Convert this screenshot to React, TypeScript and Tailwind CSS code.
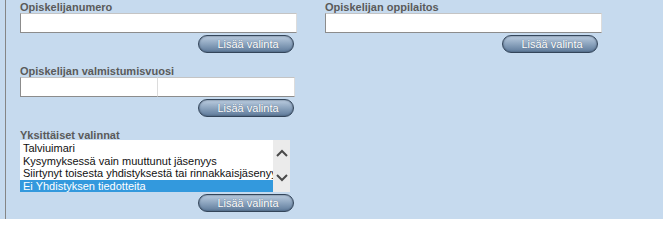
import React from "react";

const font = { fontFamily: '"Liberation Sans", Arial, sans-serif' };

function Label({ children }: { children: React.ReactNode }) {
  return (
    <div className="h-[13px] text-[11px] leading-[15px] font-bold text-[#5a5a5a] whitespace-nowrap">
      {children}
    </div>
  );
}

function TextBox({ className = "" }: { className?: string }) {
  return (
    <div
      className={`h-[20px] bg-white border border-t-[#c4c4c4] border-r-[#dcdcdc] border-b-[#8c8c8c] border-l-[#8c8c8c] ${className}`}
    />
  );
}

// rounded "Lisää valinta" pill
function AddButton({ className = "" }: { className?: string }) {
  return (
    <div className={`flex justify-end ${className}`}>
      <button className="h-[18px] w-[96px] rounded-full border border-[#33455a] bg-gradient-to-b from-[#bccde0] via-[#8ca4be] to-[#5f7b9b] pl-[4px] text-[11px] leading-[15px] text-white shadow-[inset_0_0_2px_#3d5068] [text-shadow:0_0_1px_#4a6078]">
        Lisää valinta
      </button>
    </div>
  );
}

const options = [
  "Talviuimari",
  "Kysymyksessä vain muuttunut jäsenyys",
  "Siirtynyt toisesta yhdistyksestä tai rinnakkaisjäsenyys",
  "Ei Yhdistyksen tiedotteita",
];

export default function App() {
  return (
    <div className="h-[219px] w-[663px] bg-[#c6daee] pl-[5px]" style={font}>
      <div className="h-full border-l border-[#858585] pl-[14px]">
        {/* first row: two columns */}
        <div className="flex gap-[28px]">
          <div className="w-[277px]">
            <Label>Opiskelijanumero</Label>
            <TextBox />
            <AddButton className="mt-[2px] mr-[3px]" />
          </div>
          <div className="w-[277px]">
            <Label>Opiskelijan oppilaitos</Label>
            <TextBox />
            <AddButton className="mt-[2px] mr-[4px]" />
          </div>
        </div>

        <div className="mt-[11px] w-[275px]">
          <Label>Opiskelijan valmistumisvuosi</Label>
          <div className="flex">
            <TextBox className="w-[138px]" />
            <TextBox className="w-[137px] border-l-0" />
          </div>
          <AddButton className="mt-[2px] mr-[1px]" />
        </div>

        <div className="mt-[10px] w-[275px]">
          <div className="h-[13px] text-[11px] leading-[17px] font-bold text-[#5a5a5a]">
            Yksittäiset valinnat
          </div>
          <div className="flex h-[52px] w-[270px] bg-white">
            <ul className="w-[253px] overflow-hidden pt-[2px] text-[11px] text-[#111]">
              {options.map((o, i) => (
                <li
                  key={o}
                  className={`h-[12.5px] whitespace-nowrap pl-[3px] leading-[13px] ${
                    i === 3 ? "bg-[#3399dd] text-white" : ""
                  }`}
                >
                  {o}
                </li>
              ))}
            </ul>
            <div className="flex w-[17px] flex-col items-center bg-[#ebebeb] pt-[9px]">
              <svg width="12" height="8" viewBox="0 0 12 8">
                <polyline points="1,7 6,2 11,7" fill="none" stroke="#4a4a4a" strokeWidth="2" />
              </svg>
              <svg className="mt-[17px]" width="12" height="8" viewBox="0 0 12 8">
                <polyline points="1,1 6,6 11,1" fill="none" stroke="#4a4a4a" strokeWidth="2" />
              </svg>
            </div>
          </div>
          <AddButton className="mt-[2px] mr-[1px]" />
        </div>
      </div>
    </div>
  );
}
